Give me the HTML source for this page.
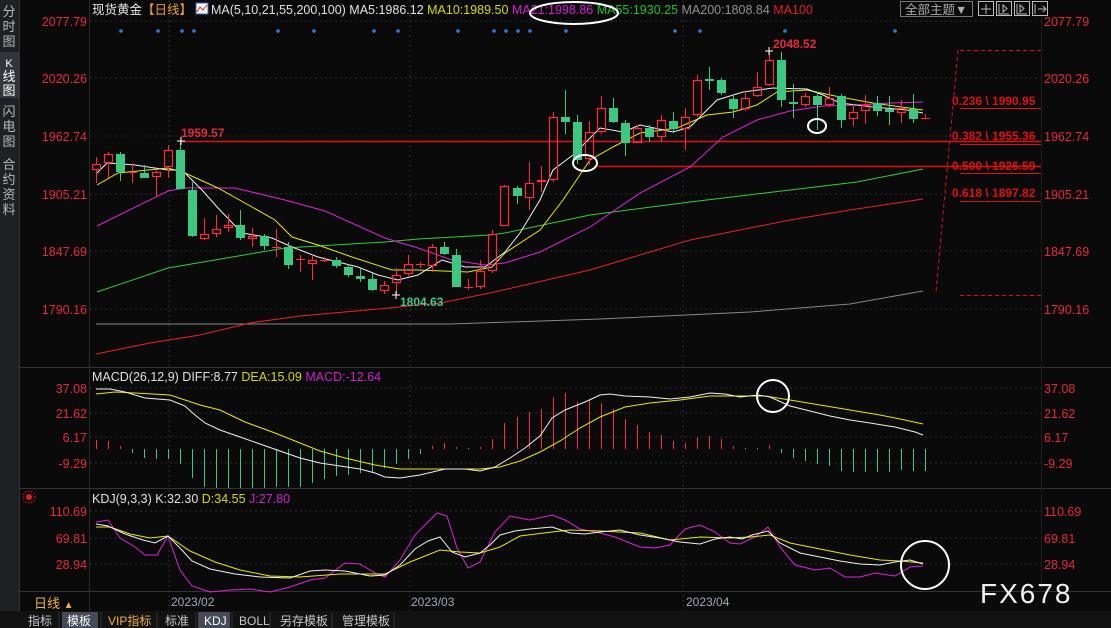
<!DOCTYPE html>
<html><head><meta charset="utf-8"><style>
html,body{margin:0;padding:0;background:#0a0a0a;width:1111px;height:628px;overflow:hidden}
svg{display:block}
text{font-family:"Liberation Sans","Noto Sans CJK SC",sans-serif}
</style></head><body>
<svg id="s" width="1111" height="628" xmlns="http://www.w3.org/2000/svg">
<rect width="1111" height="628" fill="#0a0a0a"/>
<rect x="0" y="0" width="19" height="612" fill="#1f2023"/>
<rect x="0" y="52" width="19" height="46" fill="#33363c"/>
<g fill="#b8b8b8" font-size="13" text-anchor="middle">
<text x="9" y="16">分</text><text x="9" y="31">时</text><text x="9" y="46">图</text>
<text x="9" y="67" fill="#fff" font-size="11">K</text><text x="9" y="81" fill="#fff">线</text><text x="9" y="95" fill="#fff">图</text>
<text x="9" y="116">闪</text><text x="9" y="131">电</text><text x="9" y="146">图</text>
<text x="9" y="169">合</text><text x="9" y="184">约</text><text x="9" y="199">资</text><text x="9" y="214">料</text>
</g>
<line x1="19.5" y1="0" x2="19.5" y2="612" stroke="#333"/>
<line x1="89.5" y1="0" x2="89.5" y2="612" stroke="#2a2a2a"/>
<line x1="19" y1="367.5" x2="1111" y2="367.5" stroke="#333"/>
<line x1="19" y1="488.5" x2="1111" y2="488.5" stroke="#333"/>
<line x1="19" y1="591.5" x2="1111" y2="591.5" stroke="#333"/>
<line x1="1041.5" y1="0" x2="1041.5" y2="592" stroke="#1c1c1c"/>
<g stroke="#2c2c2c" stroke-dasharray="2,3">
<line x1="90" y1="21" x2="1041" y2="21"/><line x1="90" y1="78" x2="1041" y2="78"/><line x1="90" y1="136" x2="1041" y2="136"/>
<line x1="90" y1="194" x2="1041" y2="194"/><line x1="90" y1="251" x2="1041" y2="251"/><line x1="90" y1="309" x2="1041" y2="309"/>
<line x1="90" y1="388" x2="1041" y2="388"/><line x1="90" y1="413" x2="1041" y2="413"/><line x1="90" y1="437" x2="1041" y2="437"/><line x1="90" y1="463" x2="1041" y2="463"/>
<line x1="90" y1="511" x2="1041" y2="511"/><line x1="90" y1="538" x2="1041" y2="538"/><line x1="90" y1="564" x2="1041" y2="564"/>
<line x1="169" y1="0" x2="169" y2="612"/><line x1="410" y1="0" x2="410" y2="612"/><line x1="683" y1="0" x2="683" y2="612"/>
</g>
<g fill="#e8283c" font-size="12.5" text-anchor="end">
<text x="87" y="26">2077.79</text><text x="87" y="83">2020.26</text><text x="87" y="141">1962.74</text><text x="87" y="199">1905.21</text><text x="87" y="256">1847.69</text><text x="87" y="314">1790.16</text>
<text x="87" y="393">37.08</text><text x="87" y="418">21.62</text><text x="87" y="442">6.17</text><text x="87" y="468">-9.29</text>
<text x="87" y="516">110.69</text><text x="87" y="543">69.81</text><text x="87" y="569">28.94</text>
</g>
<g fill="#e8283c" font-size="12.5">
<text x="1044" y="26">2077.79</text><text x="1044" y="83">2020.26</text><text x="1044" y="141">1962.74</text><text x="1044" y="199">1905.21</text><text x="1044" y="256">1847.69</text><text x="1044" y="314">1790.16</text>
<text x="1044" y="393">37.08</text><text x="1044" y="418">21.62</text><text x="1044" y="442">6.17</text><text x="1044" y="468">-9.29</text>
<text x="1044" y="516">110.69</text><text x="1044" y="543">69.81</text><text x="1044" y="569">28.94</text>
</g>
<text x="92" y="14" font-size="12.5" fill="#e8e8e8">现货黄金<tspan fill="#f0a030">【日线】</tspan></text>
<rect x="196" y="3" width="12" height="11" fill="#fff" stroke="#3060c0"/><polyline points="197,12 200,7 203,10 207,5" fill="none" stroke="#d02020"/>
<text x="211" y="14" font-size="12.5" fill="#e0e0e0">MA(5,10,21,55,200,100) MA5:1986.12 <tspan fill="#d8d800">MA10:1989.50</tspan> <tspan fill="#d020d0">MA21:1998.86</tspan> <tspan fill="#20c020">MA55:1930.25</tspan> <tspan fill="#909090">MA200:1808.84</tspan> <tspan fill="#e02020">MA100</tspan></text>
<ellipse cx="574" cy="13" rx="44" ry="11" fill="none" stroke="#fff" stroke-width="2"/>
<rect x="900.5" y="1.5" width="72" height="15" fill="none" stroke="#777"/>
<text x="905" y="14" font-size="12.5" fill="#aaa">全部主题▼</text>
<g fill="none" stroke="#bbb"><rect x="978.5" y="1.5" width="15" height="14"/><rect x="996.5" y="1.5" width="15" height="14"/><rect x="1014.5" y="1.5" width="15" height="14"/><rect x="1032.5" y="1.5" width="15" height="14"/>
<path d="M986 4v10M981 9h10M999 4v10h10M1003 5v7l4-3.5zM1017 4v10h10M1020 5v7l4-3.5zM1035 4v10M1038 9h7M1043 6l3 3-3 3"/></g>
<g id="dots" fill="#2a7fd8"></g>
<text x="92" y="381" font-size="12.5" fill="#e0e0e0">MACD(26,12,9) DIFF:8.77 <tspan fill="#d8d800">DEA:15.09</tspan> <tspan fill="#d020d0">MACD:-12.64</tspan></text>
<text x="92" y="503" font-size="12.5" fill="#e0e0e0">KDJ(9,3,3) K:32.30 <tspan fill="#d8d800">D:34.55</tspan> <tspan fill="#d020d0">J:27.80</tspan></text>
<circle cx="29" cy="497" r="3" fill="#e02020"/><circle cx="29" cy="497" r="6" fill="none" stroke="#e02020" stroke-dasharray="1.5,1.5"/>
<line x1="181" y1="141.5" x2="1041" y2="141.5" stroke="#e01010" stroke-width="1.5"/>
<line x1="598" y1="166.5" x2="1041" y2="166.5" stroke="#e01010" stroke-width="1.5"/>
<g stroke="#e01010"><line x1="960" y1="108.5" x2="1041" y2="108.5"/><line x1="960" y1="144.5" x2="1041" y2="144.5"/><line x1="960" y1="173.5" x2="1041" y2="173.5"/><line x1="960" y1="201.5" x2="1041" y2="201.5"/></g>
<g stroke="#e01010" stroke-dasharray="4,3"><line x1="960" y1="50.5" x2="1041" y2="50.5"/><line x1="960" y1="295.5" x2="1041" y2="295.5"/><line x1="958" y1="50" x2="936" y2="292"/></g>
<g fill="#e01010" font-size="12" font-weight="bold">
<text x="952" y="105">0.236 \ 1990.95</text><text x="952" y="140">0.382 \ 1955.36</text><text x="952" y="170">0.500 \ 1926.59</text><text x="952" y="197">0.618 \ 1897.82</text></g>
<g id="mas" fill="none" stroke-width="1.2"></g>
<g id="candles"></g>
<g id="macd"></g>
<text x="181" y="137" font-size="12" font-weight="bold" fill="#e8283c">1959.57</text>
<path d="M177 141h8M181 137v8" stroke="#fff"/>
<text x="773" y="48" font-size="12" font-weight="bold" fill="#e8283c">2048.52</text>
<path d="M765 51h8M769 47v8" stroke="#fff"/>
<text x="400" y="306" font-size="12" font-weight="bold" fill="#3ec880">1804.63</text>
<path d="M392 295h8M396 291v8" stroke="#fff"/>
<g fill="none" stroke="#fff" stroke-width="2">
<ellipse cx="585" cy="163" rx="12" ry="8"/><ellipse cx="817" cy="126" rx="9" ry="7"/>
<circle cx="773" cy="396" r="16"/><circle cx="925" cy="565" r="24"/></g>
<text x="34" y="608" font-size="13" fill="#f0b040">日线 <tspan font-size="10">▲</tspan></text>
<g fill="#a0a8b8" font-size="12"><text x="171" y="606">2023/02</text><text x="411" y="606">2023/03</text><text x="686" y="606">2023/04</text></g>
<text x="980" y="603" font-size="28" fill="#f0f0f0" letter-spacing="2">FX678</text>
<rect x="0" y="611" width="1111" height="17" fill="#121212"/>
<rect x="62" y="612" width="36" height="16" fill="#454a56"/><rect x="198" y="612" width="32" height="16" fill="#454a56"/>
<g stroke="#333"><line x1="59" y1="612" x2="59" y2="628"/><line x1="101" y1="612" x2="101" y2="628"/><line x1="157" y1="612" x2="157" y2="628"/><line x1="196" y1="612" x2="196" y2="628"/><line x1="232" y1="612" x2="232" y2="628"/><line x1="270" y1="612" x2="270" y2="628"/><line x1="332" y1="612" x2="332" y2="628"/><line x1="394" y1="612" x2="394" y2="628"/></g>
<g font-size="12" fill="#c8c8c8"><text x="28" y="625">指标</text><text x="67" y="625" fill="#fff">模板</text><text x="108" y="625" fill="#f0b040">VIP指标</text><text x="165" y="625">标准</text><text x="204" y="625" fill="#fff">KDJ</text><text x="239" y="625">BOLL</text><text x="280" y="625">另存模板</text><text x="342" y="625">管理模板</text></g>
</svg>
<script>
var NS="http://www.w3.org/2000/svg";
function el(p,t,a){var e=document.createElementNS(NS,t);for(var k in a)e.setAttribute(k,a[k]);document.getElementById(p).appendChild(e);return e;}
[121,158,182,194,278,314,374,398,458,494,506,518,530,566,675,700,785,895].forEach(function(x){el("dots","circle",{cx:x,cy:31,r:1.8});});
var C=[[170,164,157,183],[163,154,152,178],[154,172,152,181],[172,172,163,183],[173,178,165,178],[177,172,170,197],[167,150,145,178],[150,189,140,189],[190,236,182,237],[239,234,218,240],[234,229,215,237],[228,225,214,232],[225,238,210,240],[239,236,228,247],[236,246,234,250],[247,247,229,257],[247,265,242,269],[259,259,255,272],[264,260,255,280],[260,260,257,262],[260,266,257,268],[267,275,264,277],[276,279,268,282],[279,290,273,291],[291,285,281,294],[283,275,268,295],[274,264,255,276],[264,264,262,268],[266,247,244,272],[247,254,242,255],[255,287,249,287],[287,287,279,290],[287,271,260,289],[271,234,230,273],[226,186,185,226],[188,196,186,204],[198,183,162,210],[182,180,166,192],[180,117,112,182],[117,122,90,134],[122,160,115,164],[159,132,121,165],[132,108,96,134],[108,122,98,123],[123,143,120,156],[143,128,125,143],[128,137,125,142],[137,120,115,142],[121,129,112,133],[129,117,108,150],[115,80,75,117],[79,80,67,90],[80,93,78,95],[99,109,96,118],[109,98,91,111],[96,87,72,97],[85,60,51,86],[60,100,52,107],[102,104,84,118],[105,96,93,107],[96,105,92,130],[105,98,87,107],[96,120,94,128],[119,112,104,126],[111,105,95,124],[103,111,96,116],[109,112,96,125],[113,108,100,123],[109,119,94,123],[118,118,114,118]];
var dx=(925-96)/69;
C.forEach(function(c,i){var x=Math.round(96+i*dx);var up=c[1]<=c[0];var col=up?"#ff2a3a":"#3cc880";
 var top=Math.min(c[0],c[1]),bot=Math.max(c[0],c[1]);
 if(up){el("candles","line",{x1:x+.5,y1:c[2],x2:x+.5,y2:top,stroke:col});el("candles","line",{x1:x+.5,y1:bot,x2:x+.5,y2:c[3],stroke:col});
  if(bot-top<2)el("candles","line",{x1:x-4,y1:top+.5,x2:x+5,y2:top+.5,stroke:col});else el("candles","rect",{x:x-3.5,y:top+.5,width:8,height:bot-top-1,fill:"none",stroke:col,"stroke-width":1.2});}
 else{el("candles","line",{x1:x+.5,y1:c[2],x2:x+.5,y2:c[3],stroke:col});el("candles","rect",{x:x-4,y:top,width:9,height:Math.max(bot-top,2),fill:col});}
});
function pl(g,pts,col,w){el(g,"polyline",{points:pts,stroke:col,fill:"none","stroke-width":w||1});}
pl("mas","96,324 300,324 450,324 600,319 750,312 850,304 923,291","#888");
pl("mas","96,354 150,343 200,335 250,323 300,316 378,309 440,303 490,293 590,270 690,240 790,220 850,210 923,199","#f02020");
pl("mas","97,292 168,268 285,248 385,242 418,239 490,235 505,233 590,215 690,202 790,190 857,182 923,169","#30d030");
pl("mas","97,226 168,191 185,188 235,188 285,200 325,211 385,238 418,248 452,260 485,265 505,263 540,252 590,227 640,193 690,167 723,137 757,120 790,111 823,106 857,105 890,103 923,102","#e020e0");
pl("mas","97,185 118,173 168,168 185,173 218,188 252,207 275,220 292,237 318,245 352,257 392,270 418,270 468,272 492,267 505,253 540,230 563,200 590,160 613,147 640,133 677,128 707,115 733,112 757,105 777,92 807,90 840,97 873,103 923,110","#e8e800");
pl("mas","97,173 107,163 135,165 168,170 182,170 202,190 218,208 242,233 272,238 292,247 318,257 358,267 378,275 398,280 418,275 442,260 465,267 485,267 505,252 520,233 540,200 553,170 573,155 600,128 623,132 640,125 673,132 690,127 717,100 743,92 773,88 807,89 823,95 840,103 873,107 907,110 923,113","#f0f0f0");
var B=[440,441,446,453,458,459,459,464,478,487,488,488,488,488,488,487,487,487,483,479,476,475,473,473,468,464,459,454,446,443,447,449,447,439,423,417,412,409,397,393,402,400,403,409,419,425,432,435,441,443,437,436,439,446,449,449,445,453,458,461,464,466,471,472,472,472,472,470,471,471];
var base=449;
B.forEach(function(v,i){var x=Math.round(96+i*dx)+.5;var col=v<base?"#ff2a3a":"#3cc880";if(v==base)v=base-1;el("macd","line",{x1:x,y1:base,x2:x,y2:v,stroke:col});});
pl("macd","96,394 115,392 135,393 170,395 200,405 220,410 245,422 275,433 300,443 320,451 345,458 375,465 400,469 430,469 460,469 480,469 500,467 520,461 540,452 560,441 580,428 600,417 625,407 650,403 680,400 710,396 740,396 765,396 790,400 820,405 850,410 880,415 905,420 923,424","#e8e800");
pl("macd","96,389 110,389 125,392 145,398 170,400 185,406 195,415 205,423 220,430 240,437 260,444 280,451 300,458 320,463 340,466 360,469 375,473 385,477 400,478 420,475 445,469 465,469 480,471 495,467 510,458 525,448 540,436 552,418 565,410 585,402 600,395 610,394 625,396 650,397 670,399 690,397 710,393 725,394 740,397 758,395 770,397 790,406 810,411 830,416 850,420 870,423 895,427 915,432 923,435","#f0f0f0");
pl("macd","96,522 108,520 120,538 135,547 145,555 157,555 168,536 180,570 192,586 210,592 230,590 250,589 270,592 290,587 310,580 325,578 345,563 360,564 375,573 385,577 400,560 415,535 428,522 437,513 447,516 457,548 468,568 480,562 495,532 510,516 530,520 552,515 565,520 580,529 600,533 615,537 625,541 640,547 655,548 670,545 685,529 700,525 715,532 730,543 740,544 755,537 768,527 780,547 795,565 815,570 830,568 845,577 860,577 875,573 895,576 910,567 923,566","#e020e0");
pl("macd","96,527 110,527 130,534 150,538 168,536 190,551 215,562 240,570 270,576 300,577 340,574 370,574 385,574 410,562 440,550 460,552 480,553 500,547 520,536 552,532 570,530 600,531 640,533 670,540 700,537 730,538 750,537 770,535 790,543 820,549 850,555 880,560 900,561 923,563","#e8e800");
pl("macd","96,524 108,526 125,534 143,540 155,543 168,536 180,548 192,561 210,569 235,574 260,577 290,578 310,571 325,570 345,571 370,576 385,575 400,565 415,549 428,541 440,537 452,552 465,557 480,553 490,545 500,535 515,531 530,529 552,527 570,533 585,534 600,532 620,530 640,535 660,538 680,542 700,544 715,539 730,537 742,539 752,535 768,531 780,543 800,553 820,557 840,561 860,564 880,565 895,562 910,560 923,564","#f0f0f0");
</script>
</body></html>
